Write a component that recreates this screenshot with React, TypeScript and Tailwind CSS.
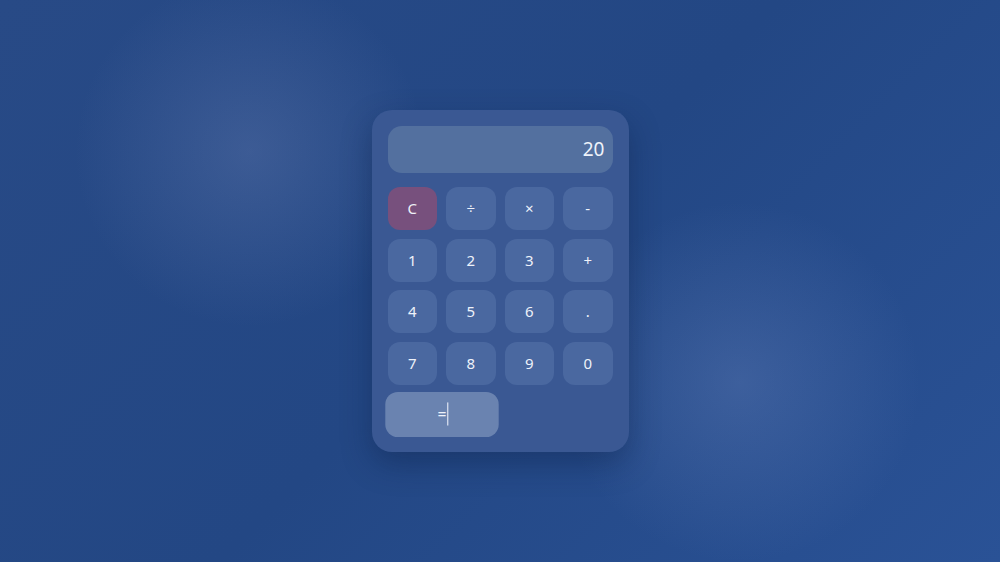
import React from 'react'

//Keys of the pad, row by row
const keys: { label: string; kind?: 'clear' }[] = [
    { label: 'C', kind: 'clear' },
    { label: '÷' },
    { label: '×' },
    { label: '-' },
    { label: '1' },
    { label: '2' },
    { label: '3' },
    { label: '+' },
    { label: '4' },
    { label: '5' },
    { label: '6' },
    { label: '.' },
    { label: '7' },
    { label: '8' },
    { label: '9' },
    { label: '0' },
]

const App = () => {
    return (
        <main
            className="flex h-[562px] w-full items-center justify-center bg-[#24488a] bg-[radial-gradient(circle_at_25%_27%,rgba(120,140,190,0.28)_0,rgba(120,140,190,0)_175px),radial-gradient(circle_at_74%_68%,rgba(120,145,200,0.28)_0,rgba(120,145,200,0)_180px),linear-gradient(135deg,#284a86_0%,#234784_50%,#2a5296_100%)]"
            style={{ fontFamily: '"Noto Sans", "Open Sans", sans-serif' }}
        >
            <div className="flex w-[257px] flex-col gap-[14px] rounded-[20px] bg-[#3a5893] p-4 shadow-[0_12px_30px_rgba(10,25,60,0.35)]">
                <div className="flex h-[47px] items-center justify-end rounded-[14px] bg-[#53709f] px-2 text-[19px] text-[#eef2fa]">
                    20
                </div>
                <div className="grid grid-cols-4 gap-x-[9px] gap-y-[8.5px]">
                    {keys.map((k) => (
                        <button
                            key={k.label}
                            className={
                                k.kind === 'clear'
                                    ? 'flex h-[43px] items-center justify-center rounded-[12px] bg-[#77507d] text-[15px] text-[#eef0f8]'
                                    : 'flex h-[43px] items-center justify-center rounded-[12px] bg-[#4a68a0] text-[15px] text-[#eef2fa]'
                            }
                        >
                            {k.label}
                        </button>
                    ))}
                    <button className="relative col-span-2 flex h-[43px] scale-105 items-center justify-center rounded-[12px] bg-[#6a83b0] text-[15px] text-[#eef2fa]">
                        =
                        <span className="absolute left-[59px] top-[10px] h-[22px] w-px bg-[#eef2fa]" />
                    </button>
                </div>
            </div>
        </main>
    )
}

export default App
